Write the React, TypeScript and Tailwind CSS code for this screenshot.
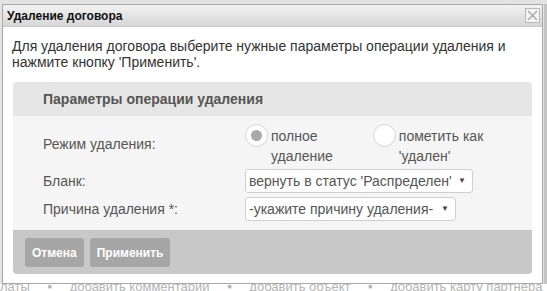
const font = { fontFamily: '"Liberation Sans", Arial, sans-serif' };

function Radio({ checked, lines }: { checked?: boolean; lines: string[] }) {
  return (
    <label className="flex items-start gap-[1px]">
      <span className="flex h-[23px] w-[23px] shrink-0 items-center justify-center rounded-full border border-[#d4d4d4] bg-white">
        {checked && <span className="h-[11px] w-[11px] rounded-full bg-[#a9a9a9]" />}
      </span>
      <span className="pl-[2px] pt-[2px] text-[14px] leading-[20px] text-[#555]">
        {lines.map((l) => (
          <div key={l}>{l}</div>
        ))}
      </span>
    </label>
  );
}

function Select({ value, width }: { value: string; width: string }) {
  return (
    <div
      className={`flex h-[24px] items-center justify-between rounded-[3px] border border-[#cfcfcf] bg-white pl-[3px] pr-[6px] text-[14px] leading-[16px] text-[#555] ${width}`}
    >
      <span className="whitespace-nowrap">{value}</span>
      <span className="text-[8px] text-[#444]">▼</span>
    </div>
  );
}

export default function App() {
  return (
    <div className="h-[291px] w-[547px] overflow-hidden bg-[#e3e3e3]" style={font}>
      <div className="flex">
        <div className="ml-[2px] mt-[4px] w-[541px] border border-[#a8a8a8] bg-white">
          {/* title bar */}
          <div className="flex h-[22px] items-center justify-between border-b border-[#c9c9c9] bg-gradient-to-b from-[#f3f3f3] to-[#d6d6d6] pl-[4px] pr-[2px]">
            <span className="text-[12px] font-bold text-[#111]">Удаление договора</span>
            <span className="flex h-[15px] w-[15px] items-center justify-center border border-[#b8b8b8] bg-[#f4f4f4]">
              <svg width="11" height="11" viewBox="0 0 11 11">
                <path d="M1 1 L10 10 M10 1 L1 10" stroke="#a7a7a7" strokeWidth="1.4" />
              </svg>
            </span>
          </div>

          <div className="px-[9px] pt-[11px] pb-[7px]">
            <p className="text-[14px] leading-[16px] text-[#333]">
              Для удаления договора выберите нужные параметры операции удаления и
              <br />
              нажмите кнопку 'Применить'.
            </p>

            {/* parameters panel */}
            <div className="mt-[12px] ml-[1px] mr-[1px] overflow-hidden rounded-[4px] bg-[#f5f5f5]">
              <div className="flex h-[34px] items-center bg-[#e6e6e6] pl-[30px] text-[14px] font-bold leading-[16px] text-[#555]">
                Параметры операции удаления
              </div>

              <div className="flex flex-col gap-[4px] pl-[30px] pt-[8px] pb-[9px]">
                <div className="flex h-[40px] items-center">
                  <span className="w-[202px] text-[14px] leading-[16px] text-[#555]">Режим удаления:</span>
                  <div className="flex self-start gap-[40px]">
                    <Radio checked lines={['полное', 'удаление']} />
                    <Radio lines={['пометить как', "'удален'"]} />
                  </div>
                </div>
                <div className="mt-[1px] flex items-center">
                  <span className="w-[202px] text-[14px] leading-[16px] text-[#555]">Бланк:</span>
                  <Select value="вернуть в статус 'Распределен'" width="w-[228px]" />
                </div>
                <div className="flex items-center">
                  <span className="w-[202px] text-[14px] leading-[16px] text-[#555]">Причина удаления *:</span>
                  <Select value="-укажите причину удаления-" width="w-[211px]" />
                </div>
              </div>

              <div className="flex gap-[6px] bg-[#c8c8c8] px-[12px] pt-[8px] pb-[7px]">
                <button className="h-[29px] rounded-[3px] bg-[#a6a6a6] px-[7px] text-[12px] font-bold leading-[14px] text-white">
                  Отмена
                </button>
                <button className="h-[29px] rounded-[3px] bg-[#a6a6a6] px-[7px] text-[12px] font-bold leading-[14px] text-white">
                  Применить
                </button>
              </div>
            </div>
          </div>
        </div>
        <div className="ml-[1px] mt-[4px] h-[280px] w-[3px] bg-[#c4c4c4]" />
      </div>

      {/* page behind the dialog */}
      <div className="h-[10px] overflow-hidden bg-white">
        <div className="-mt-[5px] whitespace-nowrap text-[13px] leading-[16px] text-[#b5b5b5]">
          латы <span className="mx-[14px]">▪</span> добавить комментарии <span className="mx-[14px]">▪</span> добавить объект{' '}
          <span className="mx-[14px]">▪</span> добавить карту партнера <span className="mx-[14px]">▪</span> запрос
        </div>
      </div>
    </div>
  );
}
